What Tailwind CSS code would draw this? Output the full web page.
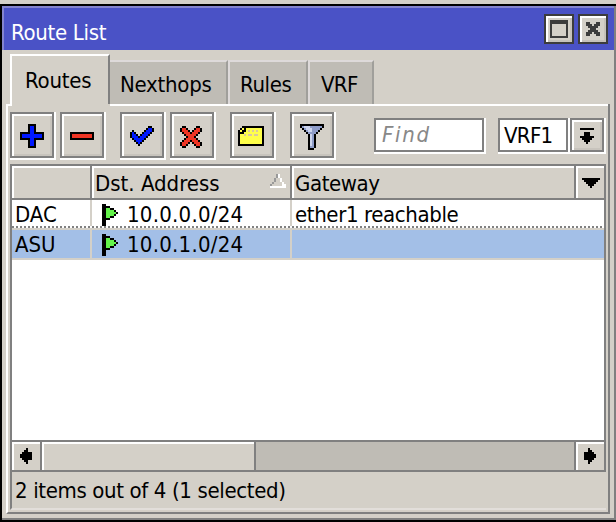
<!DOCTYPE html>
<html lang="en"><head><meta charset="utf-8"><title>Route List</title>
<script src="https://cdn.jsdelivr.net/npm/@tailwindcss/browser@4"></script></head>
<body class="w-[616px] h-[522px] overflow-hidden bg-[#d4d0c8] pt-1 text-black text-[22px] leading-7 font-['DejaVu_Sans_Condensed','DejaVu_Sans',sans-serif] tracking-[-0.7px] whitespace-nowrap">
<main class="h-[518px] border-t-2 border-l-2 border-b-2 border-black">
<div class="h-[514px] border-r-2 border-b-2 border-[#808080] flex flex-col">
  <header class="h-11 shrink-0 border-t-2 border-l-2 border-[#8484ce] bg-[#4a52c6] flex items-start pt-1.5 pr-1.5">
    <h1 class="text-white ml-[7px] mt-[5px] grow"><span class="tracking-[-0.3px]">Route List</span></h1>
    <div class="flex gap-1">
      <button class="size-[30px] border-2 border-[#3c3c3c] bg-[#d4d0c8]"><svg class="size-[26px] block" viewBox="0 0 13 13" shape-rendering="crispEdges"><path fill="#fff" d="M0 0h13v1H1v12H0z"/><path fill="#c6c2bb" d="M12 1h1v12H1v-1h11z"/><path fill="#3c3c3c" fill-rule="evenodd" d="M2 2h9v9H2zM3 4v6h7V4z"/></svg></button>
      <button class="size-[30px] border-2 border-[#3c3c3c] bg-[#d4d0c8]"><svg class="size-[26px] block" viewBox="0 0 13 13" shape-rendering="crispEdges"><path fill="#fff" d="M0 0h13v1H1v12H0z"/><path fill="#c6c2bb" d="M12 1h1v12H1v-1h11z"/><path fill="#3c3c3c" d="M3 3h2v1h1v1h1V4h1V3h2v2H9v1H8v1h1v1h1v2H8V9H7V8H6v1H5v1H3V8h1V7h1V6H4V5H3z"/></svg></button>
    </div>
  </header>
  <nav class="h-[54px] shrink-0 pt-1 pl-2 flex items-end">
    <div class="w-[100px] h-[50px] border-t-2 border-l-2 border-white border-r-2 border-r-[#808080] pl-[13px] pt-[11px]"><span class="tracking-[-0.2px]">Routes</span></div>
    <div class="grow mr-1 h-[44px] flex">
      <div class="w-[118px] bg-[#bfbcb5] border-t-2 border-t-[#dedada] border-r-2 border-r-[#a09f9b] pl-[10px] pt-[9px]"><span class="tracking-[-0.25px]">Nexthops</span></div>
      <div class="w-[80px] bg-[#bfbcb5] border-t-2 border-l-2 border-[#dedada] border-r-2 border-r-[#a09f9b] pl-[10px] pt-[9px]"><span class="tracking-[-0.35px]">Rules</span></div>
      <div class="w-[66px] bg-[#bfbcb5] border-t-2 border-l-2 border-[#dedada] border-r-2 border-r-[#a09f9b] pl-[11px] pt-[9px]"><span>VRF</span></div>
    </div>
  </nav>
  <section class="ml-1 w-[604px] h-[410px] border-l-2 border-l-white border-r-2 border-r-[#808080] border-b-2 border-b-[#808080] flex flex-col">
    <div class="h-0.5 flex shrink-0"><i class="w-1 bg-white"></i><i class="w-[98px]"></i><i class="grow bg-white"></i></div>
    <div class="h-[58px] shrink-0 pt-1.5 pl-0.5 flex items-start">
      <button class="w-[46px] h-12 border-r-2 border-b-2 border-white"><span class="flex w-[44px] h-[46px] border-2 border-[#808080]"><svg class="w-10 h-[42px]" viewBox="0 0 20 21" shape-rendering="crispEdges"><path fill="#fff" d="M0 0h20v1H1v20H0z"/><path fill="#c8c4bd" d="M19 1h1v20H1v-1h18z"/><path d="M8 5h4v4h4v4h-4v4H8v-4H4V9h4z"/><path fill="#0018ff" d="M9 6h2v4h4v2h-4v4H9v-4H5v-2h4z"/></svg></span></button>
      <button class="ml-1 w-[46px] h-12 border-r-2 border-b-2 border-white"><span class="flex w-[44px] h-[46px] border-2 border-[#808080]"><svg class="w-10 h-[42px]" viewBox="0 0 20 21" shape-rendering="crispEdges"><path fill="#fff" d="M0 0h20v1H1v20H0z"/><path fill="#c8c4bd" d="M19 1h1v20H1v-1h18z"/><path d="M4 9h12v4H4z"/><path fill="#ee3524" d="M5 10h10v2H5z"/></svg></span></button>
      <button class="ml-[14px] w-[46px] h-12 border-r-2 border-b-2 border-white"><span class="flex w-[44px] h-[46px] border-2 border-[#808080]"><svg class="w-10 h-[42px]" viewBox="0 0 20 21" shape-rendering="crispEdges"><path fill="#fff" d="M0 0h20v1H1v20H0z"/><path fill="#c8c4bd" d="M19 1h1v20H1v-1h18z"/><path d="M13 6h2v1h-2zM12 7h4v1h-4zM5 8h1v1H5zM11 8h5v1h-5zM4 9h3v1H4zM10 9h5v1h-5zM4 10h4v1H4zM9 10h5v1H9zM4 11h9v1H4zM5 12h7v1H5zM6 13h5v1H6zM7 14h3v1H7zM8 15h1v1H8z"/><path fill="#0018ff" d="M13 7h2v1h-2zM12 8h3v1h-3zM5 9h1v1H5zM11 9h3v1h-3zM5 10h2v1H5zM10 10h3v1h-3zM5 11h3v1H5zM9 11h3v1H9zM6 12h5v1H6zM7 13h3v1H7zM8 14h1v1H8z"/></svg></span></button>
      <button class="ml-1 w-[46px] h-12 border-r-2 border-b-2 border-white"><span class="flex w-[44px] h-[46px] border-2 border-[#808080]"><svg class="w-10 h-[42px]" viewBox="0 0 20 21" shape-rendering="crispEdges"><path fill="#fff" d="M0 0h20v1H1v20H0z"/><path fill="#c8c4bd" d="M19 1h1v20H1v-1h18z"/><path d="M5 6h2v1H5zM12 6h2v1h-2zM4 7h4v1H4zM11 7h4v1h-4zM4 8h5v1H4zM10 8h5v1h-5zM5 9h9v1H5zM6 10h7v1H6zM7 11h5v1H7zM6 12h7v1H6zM5 13h9v1H5zM4 14h5v1H4zM10 14h5v1h-5zM4 15h4v1H4zM11 15h4v1h-4zM5 16h2v1H5zM12 16h2v1h-2z"/><path fill="#ee3524" d="M5 7h2v1H5zM12 7h2v1h-2zM5 8h3v1H5zM11 8h3v1h-3zM6 9h3v1H6zM10 9h3v1h-3zM7 10h5v1H7zM8 11h3v1H8zM7 12h5v1H7zM6 13h3v1H6zM10 13h3v1h-3zM5 14h3v1H5zM11 14h3v1h-3zM5 15h2v1H5zM12 15h2v1h-2z"/></svg></span></button>
      <button class="ml-[14px] w-[46px] h-12 border-r-2 border-b-2 border-white"><span class="flex w-[44px] h-[46px] border-2 border-[#808080]"><svg class="w-10 h-[42px]" viewBox="0 0 20 21" shape-rendering="crispEdges"><path fill="#fff" d="M0 0h20v1H1v20H0z"/><path fill="#c8c4bd" d="M19 1h1v20H1v-1h18z"/><path d="M5 6h11v10H3V8h1V7h1z"/><path fill="#ffff4a" d="M7 7h8v8H4v-5h2V9h1z"/><path fill="#ffff4a" d="M5 7h1v1H5zM4 8h1v1H4z"/><path fill="#d9c8a0" d="M8 8h1v1H8zM10 8h1v1h-1zM12 8h1v1h-1zM6 10h1v1H6zM8 10h2v1H8zM11 10h2v1h-2z"/></svg></span></button>
      <button class="ml-[14px] w-[46px] h-12 border-r-2 border-b-2 border-white"><span class="flex w-[44px] h-[46px] border-2 border-[#808080]"><svg class="w-10 h-[42px]" viewBox="0 0 20 21" shape-rendering="crispEdges"><path fill="#fff" d="M0 0h20v1H1v20H0z"/><path fill="#c8c4bd" d="M19 1h1v20H1v-1h18z"/><path d="M4 5h12v2h-1v1h-1v1h-1v1h-1v7h-1v1H8v-8H7V9H6V8H5V7H4z"/><path fill="#8e9cc8" d="M5 6h10v1h-1v1h-1v1h-1v1h-1v7H9v-7H8V9H7V8H6V7H5z"/><path fill="#ccd4ec" d="M6 6h3v1H6zM7 7h3v1H7zM8 8h2v1H8zM9 10h1v6H9z"/></svg></span></button>
      <div class="ml-[38px] mt-1.5 w-[112px] h-9 border-r-2 border-b-2 border-white"><div class="w-[110px] h-[34px] border-2 border-[#808080] bg-white pl-[6px] pt-[1px] italic text-[#888]"><span class="tracking-[1.7px]">Find</span></div></div>
      <div class="ml-3 mt-1.5 w-[72px] h-9 border-r-2 border-b-2 border-white"><div class="w-[70px] h-[34px] border-2 border-[#808080] bg-white pl-1 pt-[2px]"><span>VRF1</span></div></div>
      <button class="mt-1.5 w-9 h-9 border-r-2 border-b-2 border-white"><span class="flex w-[34px] h-[34px] border-2 border-[#808080]"><svg class="size-[30px]" viewBox="0 0 15 15" shape-rendering="crispEdges"><path fill="#fff" d="M0 0h15v1H1v14H0z"/><path fill="#c8c4bd" d="M14 1h1v14H1v-1h13z"/><path d="M4 4h7v1H4zM6 6h3v2h2v1h-1v1H9v1H8v1H7v-1H6v-1H5V9H4V8h2z"/></svg></span></button>
    </div>
    <div class="ml-0.5 w-[596px] h-[308px] border-2 border-[#808080] bg-white flex flex-col">
      <div class="h-8 shrink-0 flex bg-[#d4d0c8]">
        <div class="w-[78px] border-t-2 border-l-2 border-white"></div>
        <div class="w-[200px] border-l-2 border-[#808080] flex"><div class="grow border-t-2 border-l-2 border-white flex justify-between pl-px"><span class="tracking-[0px] pt-[2px]">Dst. Address</span><svg class="w-4 h-[14px] mt-[6px] mr-1" viewBox="0 0 8 7" shape-rendering="crispEdges"><path fill="#fff" d="M4 0h1v2H4zM5 2h1v2H5zM6 4h1v2H6zM0 6h8v1H0zM7 5h1v1H7z"/><path fill="#999" d="M3 0h1v2H3zM2 2h1v2H2zM1 4h1v1H1zM0 5h1v1H0z"/></svg></div></div>
        <div class="w-[284px] border-l-2 border-[#808080] flex"><div class="grow border-t-2 border-l-2 border-white pl-px pt-[2px]"><span class="tracking-[-0.4px]">Gateway</span></div></div>
        <div class="w-[30px] border-l-2 border-[#808080] flex"><div class="grow border-t-2 border-l-2 border-white pt-[10px] pl-1"><svg class="w-[18px] h-[10px] block" viewBox="0 0 9 5" shape-rendering="crispEdges"><path d="M0 0h9v1H8v1H7v1H6v1H5v1H4V4H3V3H2V2H1V1H0z"/></svg></div></div>
      </div>
      <div class="h-0.5 shrink-0 bg-[#808080]"></div>
      <div class="h-[26px] shrink-0 flex">
        <div class="w-20 border-r-2 border-[#d4d0c8] pl-[3px] pt-px"><span class="tracking-[0px]">DAC</span></div>
        <div class="w-[200px] border-r-2 border-[#d4d0c8] flex pl-[10px]"><svg class="w-4 h-[22px] mt-1" viewBox="0 0 8 11" shape-rendering="crispEdges"><path d="M0 0h2v1h2v1h2v1h1v1h1v1H7v1H6v1H4v1H2v3H0z"/><path fill="#63f34a" d="M2 2h2v1h2v1h1v1H6v1H4v1H2z"/></svg><span class="ml-[9px] pt-px tracking-[0.25px]">10.0.0.0/24</span></div>
        <div class="pl-[3px] pt-px"><span class="tracking-[-0.38px]">ether1 reachable</span></div>
      </div>
      <div class="h-0.5 shrink-0 bg-[repeating-linear-gradient(90deg,#808080_0_2px,#ffffff_2px_4px)]"></div>
      <div class="h-0.5 shrink-0 bg-[#d4d0c8]"></div>
      <div class="h-[30px] shrink-0 flex bg-[#a3bfe7] border-b-2 border-[#d4d0c8]">
        <div class="w-20 border-r-2 border-[#d4d0c8] pl-[3px] pt-px"><span class="tracking-[0px]">ASU</span></div>
        <div class="w-[200px] border-r-2 border-[#d4d0c8] flex pl-[10px]"><svg class="w-4 h-[22px] mt-1" viewBox="0 0 8 11" shape-rendering="crispEdges"><path d="M0 0h2v1h2v1h2v1h1v1h1v1H7v1H6v1H4v1H2v3H0z"/><path fill="#63f34a" d="M2 2h2v1h2v1h1v1H6v1H4v1H2z"/></svg><span class="ml-[9px] pt-px tracking-[0.25px]">10.0.1.0/24</span></div>
      </div>
      <div class="grow"></div>
      <div class="h-[30px] shrink-0 border-t-2 border-[#808080] bg-[#bfbcb5] flex">
        <div class="w-7 bg-[#d4d0c8] border-t-2 border-l-2 border-white"><svg class="w-3 h-4 mt-1 ml-1.5" viewBox="0 0 6 8" shape-rendering="crispEdges"><path d="M3 0h1v2h2v4H4v2H3V7H2V6H1V5H0V3h1V2h1V1h1z"/></svg></div>
        <div class="w-[216px] border-x-2 border-[#808080] flex"><div class="grow bg-[#d4d0c8] border-t-2 border-l-2 border-white"></div></div>
        <div class="grow"></div>
        <div class="w-[30px] border-l-2 border-[#808080] flex"><div class="grow bg-[#d4d0c8] border-t-2 border-l-2 border-white"><svg class="w-3 h-4 mt-1 ml-1.5" viewBox="0 0 6 8" shape-rendering="crispEdges"><path d="M2 0h1v1h1v1h1v1h1v2H5v1H4v1H3v1H2V6H0V2h2z"/></svg></div></div>
      </div>
    </div>
    <footer class="ml-0.5 w-[596px] h-[38px] border-l-2 border-l-[#808080] border-b-2 border-b-[#e2deda] pl-[3px] pt-[5px]"><span class="tracking-[-0.36px]">2 items out of 4 (1 selected)</span></footer>
  </section>
</div>
</main>
</body></html>
